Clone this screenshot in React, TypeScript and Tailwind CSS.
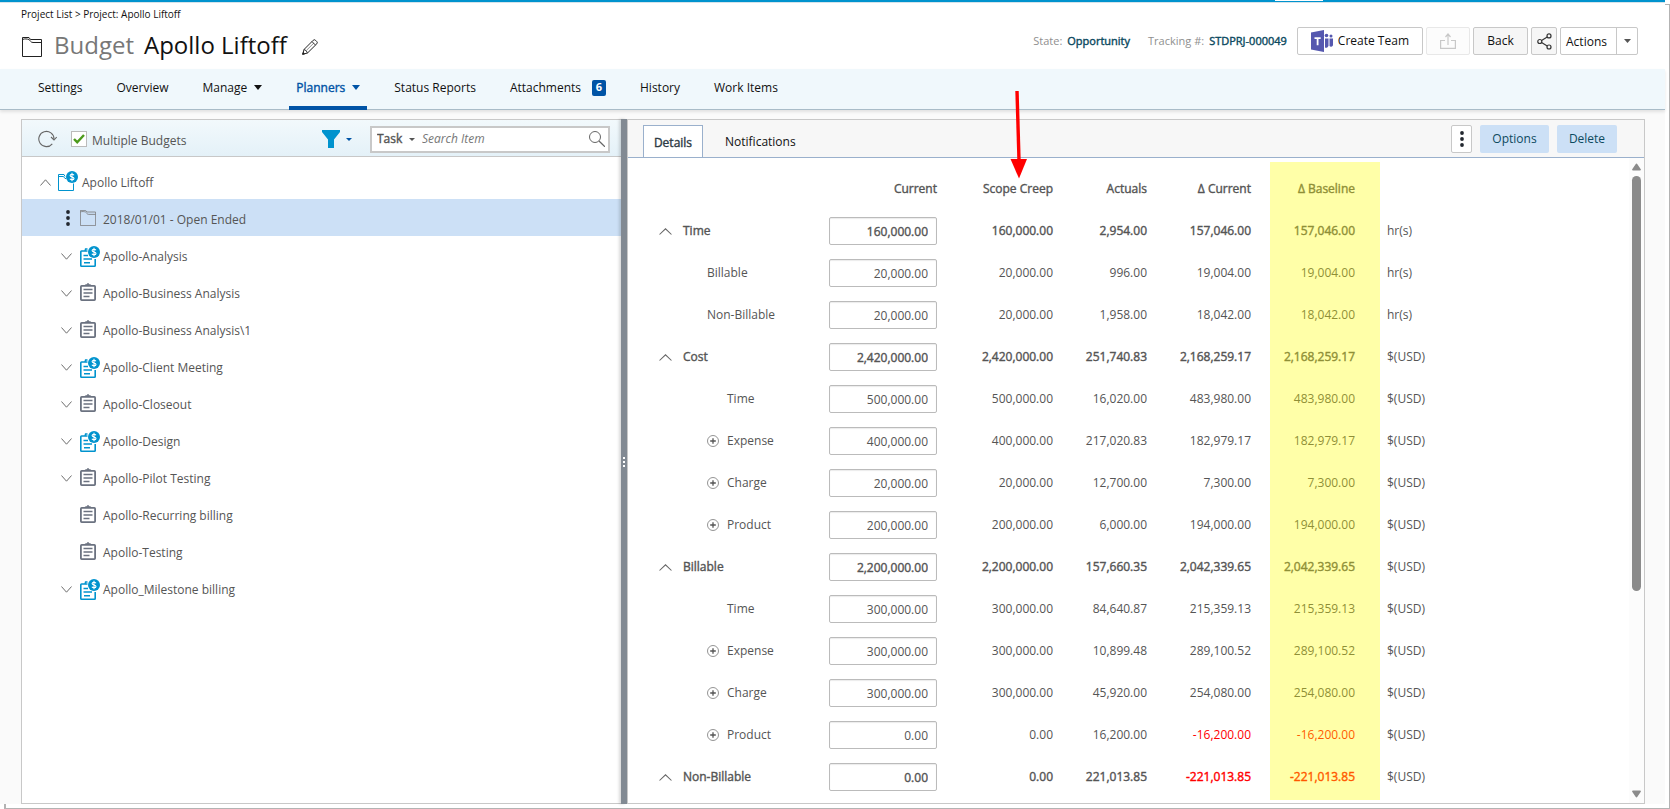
import React, { useState } from 'react';

const BOLD = '[-webkit-text-stroke:0.4px_currentColor]';

/* ---------- icons ---------- */

function FolderIcon({ className }: { className: string }) {
  return (
    <svg className={className} viewBox="0 0 20 20" fill="none" stroke="currentColor" strokeWidth="1">
      <path d="M0.5 19.5V0.500H7l1.500 2H19.5V19.5z" />
      <path d="M0.500 2.500C3 1.500 5 2 7 2.500C8.500 3.500 8.500 5.500 11 5.500H19.500" />
    </svg>
  );
}

function PencilIcon() {
  return (
    <svg className="h-4 w-4" viewBox="0 0 16 16" fill="none" stroke="#222" strokeWidth="1" strokeLinejoin="round">
      <path d="M0.700 15.300L2 10.500L11.200 1.300a1.600 1.600 0 0 1 2.300 0L14.800 2.600a1.600 1.600 0 0 1 0 2.200L5.500 14z" />
      <path d="M2 10.500Q4.500 11 5.500 14M10 2.600L13.500 6.100" strokeWidth="0.900" />
      <path d="M4.500 11.300L12 3.900" strokeWidth="0.500" />
      <path d="M0.700 15.300l0.500-1.800 1.300 1.300z" fill="#222" />
    </svg>
  );
}

function Caret({ className }: { className: string }) {
  return (
    <svg className={className} viewBox="0 0 8 5" preserveAspectRatio="none" fill="currentColor">
      <path d="M0 0H8L4 5z" />
    </svg>
  );
}

function TeamsIcon() {
  return (
    <svg className="h-[22px] w-[22px]" viewBox="0 0 22 22">
      <path d="M0 2.500L13 0V22L0 19.500z" fill="#5558af" />
      <path d="M3.500 7.200H9.700V9H7.500V15.200H5.700V9H3.500z" fill="#fff" />
      <circle cx="15.500" cy="5.500" r="1.800" fill="#5558af" />
      <circle cx="20" cy="6" r="1.500" fill="#5558af" />
      <path d="M14 8.500H17.500V15.500a2.500 2.500 0 0 1-3.500 2z" fill="#5558af" />
      <path d="M18.500 8.500H22V14.500a2 2 0 0 1-3.500 1.500z" fill="#5558af" />
    </svg>
  );
}

function ExportIcon() {
  return (
    <svg className="h-4 w-4" viewBox="0 0 16 16" fill="none" stroke="#c8c8c8" strokeWidth="1.200">
      <path d="M5 7.500H0.600V15.400H15.400V7.500H11" />
      <path d="M8 12V1.500M5.500 4L8 1L10.500 4" />
    </svg>
  );
}

function ShareIcon() {
  return (
    <svg className="h-[17px] w-[15px]" viewBox="0 0 15 17" fill="none" stroke="#333" strokeWidth="1.200">
      <circle cx="2.800" cy="8.500" r="2" />
      <circle cx="12" cy="2.900" r="2" />
      <circle cx="12" cy="14" r="2" />
      <path d="M4.600 7.400L10.200 4M4.600 9.600L10.200 12.900" />
    </svg>
  );
}

function RefreshIcon() {
  return (
    <svg className="h-[18px] w-[19px]" viewBox="0 0 19 18" fill="none" stroke="#666" strokeWidth="1.100">
      <path d="M14.300 13.800A7.600 7.600 0 1 1 16 9" />
      <path d="M13 7L16 10L18.700 7" />
    </svg>
  );
}

function FunnelIcon() {
  return (
    <svg className="h-[18px] w-[18px]" viewBox="0 0 18 18" fill="#0093ce">
      <path d="M0 0H18V2L12 9.500V18H6V9.500L0 2z" />
    </svg>
  );
}

function SearchIcon() {
  return (
    <svg className="h-4 w-4" viewBox="0 0 16 16" fill="none" stroke="#666" strokeWidth="1">
      <circle cx="6" cy="6" r="5.500" />
      <path d="M10 10L16 15.800" strokeWidth="1.300" />
    </svg>
  );
}

function Chevron({ up = false, className = '' }: { up?: boolean; className?: string }) {
  return (
    <svg className={`h-[7px] ${className}`} viewBox="0 0 12 7" preserveAspectRatio="none" fill="none" stroke="#666" strokeWidth="1">
      <path d={up ? 'M0.500 6.500L6 0.800L11.500 6.500' : 'M0.500 0.500L6 6.200L11.500 0.500'} />
    </svg>
  );
}

function Kebab() {
  return (
    <svg className="h-4 w-1" viewBox="0 0 4 16" fill="#22272f">
      <circle cx="2" cy="2" r="1.900" />
      <circle cx="2" cy="8" r="1.900" />
      <circle cx="2" cy="14" r="1.900" />
    </svg>
  );
}

function DollarBadge() {
  return (
    <>
      <circle cx="14" cy="6" r="6" fill="#0093ce" />
      <path
        d="M16 4.200C15.500 3.500 14.800 3.300 14 3.300C12.900 3.300 12.100 3.800 12.100 4.600C12.100 6.500 16 5.400 16 7.400C16 8.300 15.100 8.700 14 8.700C13.100 8.700 12.300 8.400 11.900 7.700M14 1.800V10.200"
        fill="none"
        stroke="#fff"
        strokeWidth="1.100"
      />
    </>
  );
}

function BudgetFolderIcon() {
  return (
    <svg className="h-5 w-5" viewBox="0 0 20 20">
      <path d="M0.500 19.500V3.500H6l1 2M0.500 19.500H15.500V12.500M0.500 5.500H5.500L7 7.500H8" fill="none" stroke="#0093ce" />
      <DollarBadge />
    </svg>
  );
}

function BudgetTaskIcon() {
  return (
    <svg className="h-[21px] w-5" viewBox="0 0 20 21">
      <path d="M7.500 5H1.500Q0.800 5 0.800 5.700V19.500Q0.800 20.200 1.500 20.200H14.500Q15.200 20.200 15.200 19.500V13" fill="none" stroke="#0093ce" strokeWidth="1.600" />
      <path d="M5 5L5.500 3H7.500" fill="none" stroke="#0093ce" strokeWidth="1.300" />
      <path d="M3.500 9.500H8M3.500 13H12M4 16.700H10" stroke="#0093ce" strokeWidth="1.600" />
      <DollarBadge />
    </svg>
  );
}

function TaskIcon() {
  return (
    <svg className="h-[18px] w-4" viewBox="0 0 16 18" fill="none" stroke="#6b7280">
      <rect x="0.900" y="2.900" width="14.200" height="14.200" rx="0.800" strokeWidth="1.800" />
      <path d="M5 2.500L6 1.800H7L8 0.600L9 1.800H10L11 2.500" strokeWidth="1.200" />
      <path d="M3.500 6.500H12.500M3.500 10H12.500M3.500 13.500H9.500" strokeWidth="1.500" />
    </svg>
  );
}

function PlusCircle() {
  return (
    <svg className="h-3 w-3" viewBox="0 0 12 12" fill="none">
      <circle cx="6" cy="6" r="5.500" stroke="#888" strokeWidth="0.900" />
      <path d="M3.200 6H8.800M6 3.200V8.800" stroke="#555" strokeWidth="1.300" />
    </svg>
  );
}

/* ---------- header ---------- */

function Header() {
  return (
    <header className="flex justify-between bg-white pl-[21px] pr-[27px]">
      <div>
        <nav aria-label="Breadcrumb" className="pt-1 text-[10px] leading-[14px]">
          <a href="#list">Project List</a> &gt; <a href="#project">Project: Apollo Liftoff</a>
        </nav>
        <div className="flex h-12 items-center pb-px pt-1 pl-px">
          <FolderIcon className="h-5 w-5 text-[#222]" />
          <h1 className="pb-1 pl-3 text-2xl text-[#111]">
            <span className="mr-[10px] text-[#777]">Budget</span>
            Apollo Liftoff
          </h1>
          <button aria-label="Edit title" className="ml-[15px]">
            <PencilIcon />
          </button>
        </div>
      </div>
      <div className="mt-6 flex h-7 items-center text-[11px] text-[#111]">
        <span className="mr-[5px] text-[#8f8f8f]">State:</span>
        <span className={`mr-[18px] text-[#0c4a60] ${BOLD}`}>Opportunity</span>
        <span className="mr-[5px] text-[#8f8f8f]">Tracking #:</span>
        <span className={`mr-[10px] text-[#0c4a60] ${BOLD}`}>STDPRJ-000049</span>
        <div className="flex h-7 gap-[3px] text-xs">
          <button className="flex items-center gap-[5px] rounded-xs border border-[#c8c8c8] px-[13px]">
            <TeamsIcon />
            Create Team
          </button>
          <button aria-label="Export" disabled className="flex w-11 items-center justify-center rounded-xs border border-[#e8e8e8] bg-[#fcfcfc]">
            <ExportIcon />
          </button>
          <button className="w-[55px] rounded-xs border border-[#c8c8c8] bg-[#f6f6f6]">Back</button>
          <button aria-label="Share" className="flex w-[26px] items-center justify-center rounded-xs border border-[#c8c8c8] bg-[#f6f6f6]">
            <ShareIcon />
          </button>
          <div className="flex rounded-xs border border-[#c8c8c8]">
            <button className="w-[55px] pr-1 pt-0.5">Actions</button>
            <button aria-label="More actions" className="flex w-[21px] items-center justify-center border-l border-[#c8c8c8]">
              <Caret className="h-1 w-[7px] text-[#555]" />
            </button>
          </div>
        </div>
      </div>
    </header>
  );
}

const NAV = [
  { label: 'Settings' },
  { label: 'Overview' },
  { label: 'Manage', menu: true },
  { label: 'Planners', menu: true, active: true },
  { label: 'Status Reports' },
  { label: 'Attachments', badge: 6 },
  { label: 'History' },
  { label: 'Work Items' },
];

function MainNav() {
  return (
    <nav aria-label="Project" className="flex h-[41px] gap-5 border-b border-[#a9bcc8] bg-[#f0f8fc] pl-[31px] text-xs text-[#111] shadow-[0_2px_3px_rgba(0,0,0,0.1)]">
      {NAV.map((n) => (
        <a
          key={n.label}
          href="#nav"
          aria-current={n.active ? 'page' : undefined}
          className={`-mb-px flex items-center border-b-4 px-[7px] ${
            n.active ? `border-b-[#0054a6] text-[#0054a6] ${BOLD}` : 'border-b-transparent'
          }`}
        >
          {n.label}
          {n.menu && <Caret className="ml-[7px] h-[5px] w-2" />}
          {n.badge && (
            <span className="ml-[11px] flex h-4 w-[14px] items-center justify-center rounded-xs bg-[#0054a6] text-[11px] font-bold text-white">
              {n.badge}
            </span>
          )}
        </a>
      ))}
    </nav>
  );
}

/* ---------- left: task tree ---------- */

type TreeItem = { label: string; icon: 'task' | 'budget'; leaf?: boolean };

const TREE: TreeItem[] = [
  { label: 'Apollo-Analysis', icon: 'budget' },
  { label: 'Apollo-Business Analysis', icon: 'task' },
  { label: 'Apollo-Business Analysis\\1', icon: 'task' },
  { label: 'Apollo-Client Meeting', icon: 'budget' },
  { label: 'Apollo-Closeout', icon: 'task' },
  { label: 'Apollo-Design', icon: 'budget' },
  { label: 'Apollo-Pilot Testing', icon: 'task' },
  { label: 'Apollo-Recurring billing', icon: 'task', leaf: true },
  { label: 'Apollo-Testing', icon: 'task', leaf: true },
  { label: 'Apollo_Milestone billing', icon: 'budget' },
];

function TreePanel() {
  const [multiple, setMultiple] = useState(true);
  return (
    <section aria-label="Tasks" className="w-[600px] shrink-0 border border-r-0 border-[#c8c8c8] bg-white">
      <div className="flex h-[37px] items-center border-b border-[#c8c8c8] bg-linear-to-b from-[#f2f9fc] to-[#e4f1f8] pl-4 pr-[11px] pt-0.5">
        <button aria-label="Refresh">
          <RefreshIcon />
        </button>
        <label className="ml-[14px] flex items-center gap-[5px] text-xs text-[#555]">
          <input
            type="checkbox"
            checked={multiple}
            onChange={(e) => setMultiple(e.target.checked)}
            className="peer sr-only"
          />
          <span className="flex h-4 w-4 items-center justify-center border border-[#bbb] bg-white">
            {multiple && (
              <svg className="h-2.5 w-3" viewBox="0 0 12 10" fill="none" stroke="#4c9a1c" strokeWidth="2.400">
                <path d="M1 5L4.200 8.200L11 1" />
              </svg>
            )}
          </span>
          <span className="pt-1">Multiple Budgets</span>
        </label>
        <button aria-label="Filter" className="ml-auto flex items-center gap-1.5 text-[#0054a6]">
          <FunnelIcon />
          <Caret className="h-[3px] w-1.5" />
        </button>
        <div className="ml-[18px] flex h-[27px] w-60 items-center border-2 border-[#c8c8c8] bg-white pl-[5px] pr-[3px] text-xs text-[#555]">
          <label className="flex items-center">
            <span className="sr-only">Search in</span>
            <select className={`h-5 w-10 appearance-none bg-transparent leading-5 outline-none ${BOLD}`}>
              <option>Task</option>
            </select>
            <Caret className="pointer-events-none -ml-2 h-[3px] w-1.5" />
          </label>
          <input
            type="search"
            aria-label="Search Item"
            placeholder="Search Item"
            className="ml-[7px] min-w-0 flex-1 bg-transparent italic outline-none placeholder:text-[#777]"
          />
          <button aria-label="Search">
            <SearchIcon />
          </button>
        </div>
      </div>
      <ul className="pt-[5px] text-xs text-[#555]">
        <li className="flex h-[37px] items-center pl-[18px]">
          <button aria-label="Collapse" className="pt-1">
            <Chevron up className="w-[11px]" />
          </button>
          <span className="mx-[7px] w-[17px]">
            <BudgetFolderIcon />
          </span>
          <span className="pt-1">Apollo Liftoff</span>
        </li>
        <li className="flex h-[37px] items-center bg-[#cce0f6] pl-11">
          <button aria-label="Row menu">
            <Kebab />
          </button>
          <span className="ml-[10px] mr-[7px] text-[#777]">
            <FolderIcon className="h-4 w-4" />
          </span>
          <span className="pt-1">2018/01/01 - Open Ended</span>
        </li>
        {TREE.map((t) => (
          <li key={t.label} className="flex h-[37px] items-center pl-[39px]">
            <span className="flex w-[19px] pt-1">
              {!t.leaf && (
                <button aria-label="Expand">
                  <Chevron className="w-[11px]" />
                </button>
              )}
            </span>
            {t.icon === 'budget' ? (
              <span className="w-[23px] pt-1">
                <BudgetTaskIcon />
              </span>
            ) : (
              <span className="w-[23px]">
                <TaskIcon />
              </span>
            )}
            <span className="pt-1">{t.label}</span>
          </li>
        ))}
      </ul>
    </section>
  );
}

/* ---------- right: budget table ---------- */

type Row = { label: string; level: 0 | 1 | 2; plus?: boolean; v: string[]; unit: string };

const H = 'hr(s)';
const U = '$(USD)';
const ROWS: Row[] = [
  { label: 'Time', level: 0, v: ['160,000.00', '160,000.00', '2,954.00', '157,046.00', '157,046.00'], unit: H },
  { label: 'Billable', level: 1, v: ['20,000.00', '20,000.00', '996.00', '19,004.00', '19,004.00'], unit: H },
  { label: 'Non-Billable', level: 1, v: ['20,000.00', '20,000.00', '1,958.00', '18,042.00', '18,042.00'], unit: H },
  { label: 'Cost', level: 0, v: ['2,420,000.00', '2,420,000.00', '251,740.83', '2,168,259.17', '2,168,259.17'], unit: U },
  { label: 'Time', level: 2, v: ['500,000.00', '500,000.00', '16,020.00', '483,980.00', '483,980.00'], unit: U },
  { label: 'Expense', level: 2, plus: true, v: ['400,000.00', '400,000.00', '217,020.83', '182,979.17', '182,979.17'], unit: U },
  { label: 'Charge', level: 2, plus: true, v: ['20,000.00', '20,000.00', '12,700.00', '7,300.00', '7,300.00'], unit: U },
  { label: 'Product', level: 2, plus: true, v: ['200,000.00', '200,000.00', '6,000.00', '194,000.00', '194,000.00'], unit: U },
  { label: 'Billable', level: 0, v: ['2,200,000.00', '2,200,000.00', '157,660.35', '2,042,339.65', '2,042,339.65'], unit: U },
  { label: 'Time', level: 2, v: ['300,000.00', '300,000.00', '84,640.87', '215,359.13', '215,359.13'], unit: U },
  { label: 'Expense', level: 2, plus: true, v: ['300,000.00', '300,000.00', '10,899.48', '289,100.52', '289,100.52'], unit: U },
  { label: 'Charge', level: 2, plus: true, v: ['300,000.00', '300,000.00', '45,920.00', '254,080.00', '254,080.00'], unit: U },
  { label: 'Product', level: 2, plus: true, v: ['0.00', '0.00', '16,200.00', '-16,200.00', '-16,200.00'], unit: U },
  { label: 'Non-Billable', level: 0, v: ['0.00', '0.00', '221,013.85', '-221,013.85', '-221,013.85'], unit: U },
];

function BudgetTable() {
  return (
    <div className="relative flex-1">
      <table className="mt-[10px] w-full table-fixed text-xs text-[#555]">
        <colgroup>
          <col className="w-[201px]" />
          <col className="w-[108px]" />
          <col className="w-[116px]" />
          <col className="w-[94px]" />
          <col className="w-[104px]" />
          <col className="w-[104px]" />
          <col />
        </colgroup>
        <thead>
          <tr className="h-[42px]">
            <td />
            {['Current', 'Scope Creep', 'Actuals', 'Δ Current', 'Δ Baseline'].map((h) => (
              <th key={h} scope="col" className={`p-0 text-right font-normal ${BOLD}`}>
                {h}
              </th>
            ))}
            <td />
          </tr>
        </thead>
        <tbody>
          {ROWS.map((r, i) => {
            const id = `row-${i}`;
            const weight = r.level === 0 ? BOLD : '';
            return (
              <tr key={id} className="h-[42px]">
                <th scope="row" className={`p-0 text-left font-normal ${weight}`}>
                  <div className={`flex items-center ${r.level === 0 ? 'pl-[31px]' : 'pl-[79px]'}`}>
                    {r.level === 0 && (
                      <button aria-label={`Collapse ${r.label}`} className="mr-[11px]">
                        <Chevron up className="w-[13px]" />
                      </button>
                    )}
                    {r.level === 2 && (
                      <span className="flex w-5">
                        {r.plus && (
                          <button aria-label={`Expand ${r.label}`}>
                            <PlusCircle />
                          </button>
                        )}
                      </span>
                    )}
                    <label htmlFor={id}>{r.label}</label>
                  </div>
                </th>
                <td className="p-0 pb-px">
                  <input
                    id={id}
                    defaultValue={r.v[0]}
                    className={`block h-7 w-full rounded-xs border border-[#bbb] pr-2 pt-0.5 text-right shadow-[inset_0_1px_1px_rgba(0,0,0,0.08)] ${weight}`}
                  />
                </td>
                {r.v.slice(1).map((v, j) => (
                  <td key={j} className={`p-0 text-right ${weight} ${v.startsWith('-') ? 'text-[#f00]' : ''}`}>
                    {v}
                  </td>
                ))}
                <td className="p-0 pl-8">{r.unit}</td>
              </tr>
            );
          })}
        </tbody>
      </table>
      <div className="pointer-events-none absolute bottom-[3px] left-[642px] top-1 w-[110px] bg-[#ffff00]/34" />
    </div>
  );
}

function DetailPanel() {
  return (
    <section aria-label="Budget details" className="flex min-w-0 flex-1 flex-col border border-[#c8c8c8] bg-white">
      <div className="flex h-[38px] items-end border-b border-[#9ab0cc] bg-[#f7f7f7] pl-[15px] pr-[27px] text-xs text-[#111]">
        <div role="tablist" className="flex self-end">
          <button role="tab" aria-selected="true" className={`-mb-px h-8 w-[60px] border border-b-0 border-[#9ab0cc] bg-white pt-0.5 text-[#2f3b45] ${BOLD}`}>
            Details
          </button>
          <button role="tab" aria-selected="false" className="h-8 px-[22px] pt-0.5">
            Notifications
          </button>
        </div>
        <div className="mb-1 ml-auto flex h-7 gap-2">
          <button aria-label="More" className="flex w-[21px] items-center justify-center rounded-xs border border-[#c8c8c8] bg-white">
            <Kebab />
          </button>
          <button className="w-[69px] rounded-xs bg-[#cce0f6] text-[#0c4a60]">Options</button>
          <button className="w-[60px] rounded-xs bg-[#cce0f6] text-[#0c4a60]">Delete</button>
        </div>
      </div>
      <div className="flex flex-1">
        <BudgetTable />
        <div aria-hidden="true" className="flex w-[15px] flex-col items-center bg-[#fcfcfc] py-[5px]">
          <svg className="h-2 w-[9px]" viewBox="0 0 9 8" fill="#8b8b8b">
            <path d="M4.500 0.500Q5 0.500 5.400 1.200L8.800 6.200Q9.200 7.500 8 7.500H1Q-0.200 7.500 0.200 6.200L3.600 1.200Q4 0.500 4.500 0.500z" />
          </svg>
          <div className="mt-[5px] h-[415px] w-[9px] rounded-full bg-[#8b8b8b]" />
          <svg className="mt-auto h-2 w-[9px]" viewBox="0 0 9 8" fill="#8b8b8b">
            <path d="M4.500 7.500Q5 7.500 5.400 6.800L8.800 1.800Q9.200 0.500 8 0.500H1Q-0.200 0.500 0.200 1.800L3.600 6.800Q4 7.500 4.500 7.500z" />
          </svg>
        </div>
      </div>
    </section>
  );
}

export default function App() {
  return (
    <div className="relative flex min-h-screen flex-col bg-white pb-[5px] pr-[5px] font-['Open_Sans',sans-serif] text-[#111]">
      <div className="pointer-events-none absolute bottom-0 left-1 right-0 top-1 border border-l-2 border-[#b3b3b3]" />
      <div className="relative flex flex-1 flex-col bg-[#fafafa]">
        <div className="flex h-[3px] justify-end border-b border-[#d5e3ea] bg-[#0093ce] pr-[342px]">
          <div className="h-px w-12 bg-white" />
        </div>
        <Header />
        <MainNav />
        <main className="mt-[9px] flex flex-1 pl-[21px] pr-5">
          <TreePanel />
          <div className="flex w-1.5 flex-col items-center justify-center gap-0.5 bg-[#828a93] shadow-[-2px_0_3px_rgba(0,0,0,0.15)]">
            <span className="h-0.5 w-0.5 bg-white" />
            <span className="h-0.5 w-0.5 bg-white" />
            <span className="h-0.5 w-0.5 bg-white" />
          </div>
          <DetailPanel />
        </main>
        <svg aria-hidden="true" className="pointer-events-none absolute left-[1010px] top-[91px] h-[88px] w-[18px]" viewBox="0 0 18 88">
          <path d="M5.300 0H8.700L10.700 69H7.300z" fill="#f00" />
          <path d="M0.500 68H17L9 87.500z" fill="#f00" />
        </svg>
      </div>
    </div>
  );
}
